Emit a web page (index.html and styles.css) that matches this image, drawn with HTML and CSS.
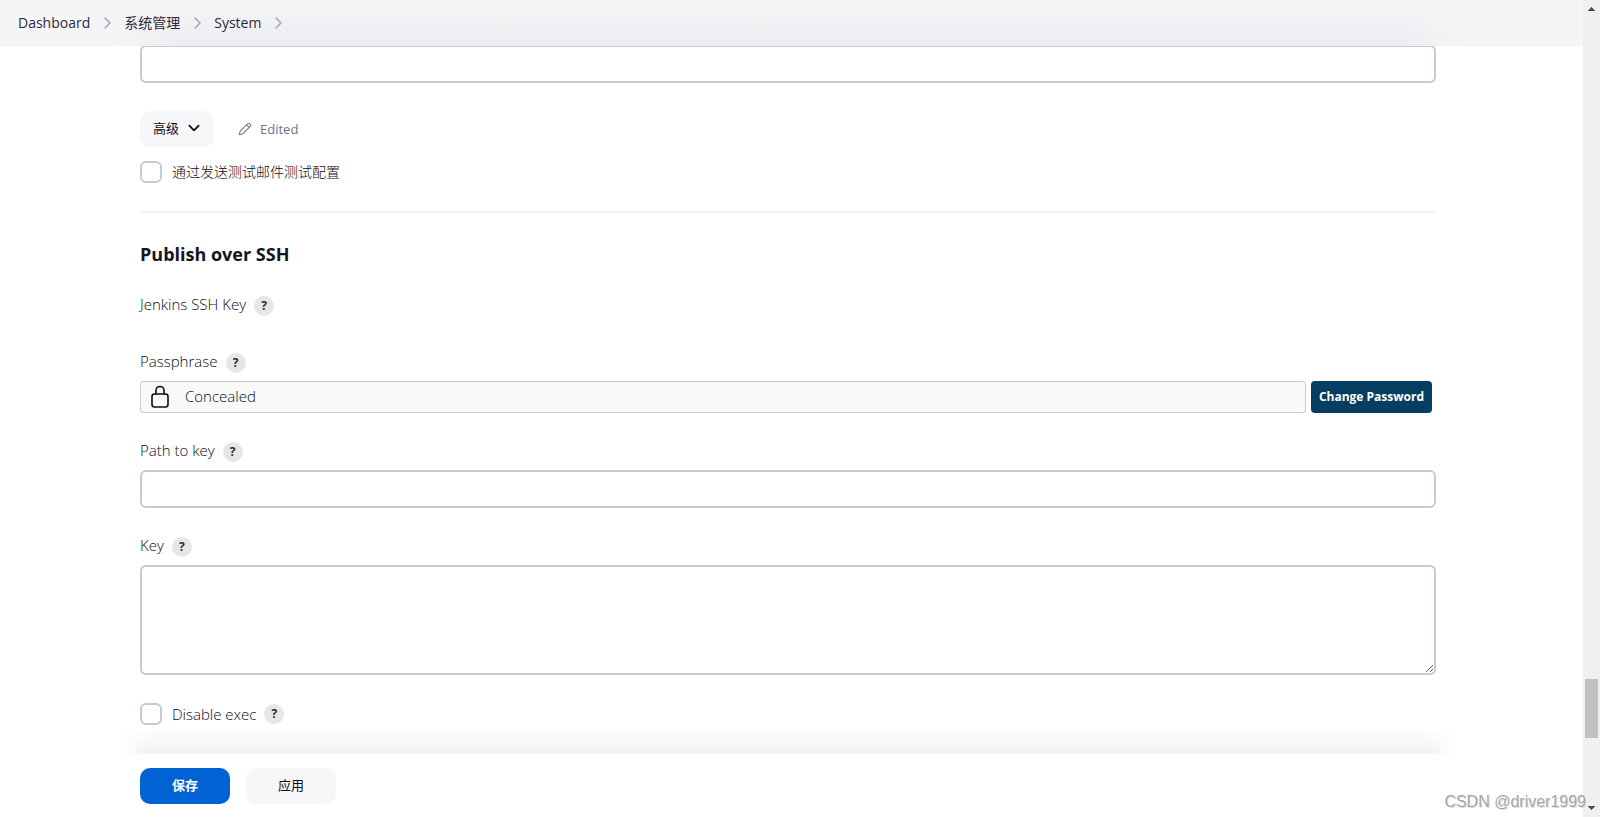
FILE: index.html
```html
<!DOCTYPE html>
<html lang="zh-CN">
<head>
  <meta charset="UTF-8">
  <title>System [Jenkins]</title>
  <link rel="stylesheet" href="styles.css">
</head>
<body>
  <div class="page">
    <nav class="breadcrumbs">
      <a href="#">Dashboard</a>
      <svg class="chevron" viewBox="0 0 12 12"><path d="M4 1l5 5-5 5"/></svg>
      <a href="#">系统管理</a>
      <svg class="chevron" viewBox="0 0 12 12"><path d="M4 1l5 5-5 5"/></svg>
      <a href="#">System</a>
      <svg class="chevron" viewBox="0 0 12 12"><path d="M4 1l5 5-5 5"/></svg>
    </nav>

    <form class="config" id="config">
      <input class="text-input" type="text" aria-label="用户默认邮件后缀">

      <div class="advanced">
        <button class="btn btn-advanced" type="button">高级
          <svg viewBox="0 0 12 12"><path d="M2 4l4 4 4-4"/></svg>
        </button>
        <span class="edited">
          <svg viewBox="0 0 16 16"><path d="M1.500 14.500l1-4L11 2a1.700 1.700 0 0 1 2.400 0l.6.6a1.700 1.700 0 0 1 0 2.400L5.500 13.500z M9.800 3.200l3 3"/></svg>
          Edited
        </span>
      </div>

      <div class="check-row">
        <input type="checkbox" id="testMail">
        <label for="testMail">通过发送测试邮件测试配置</label>
      </div>

      <section class="section">
        <h2>Publish over SSH</h2>

        <div class="item item-empty">
          <div class="item-label"><span>Jenkins SSH Key</span><button class="help" type="button">?</button></div>
        </div>

        <div class="item">
          <div class="item-label"><span>Passphrase</span><button class="help" type="button">?</button></div>
          <div class="secret">
            <div class="secret-value">
              <svg viewBox="0 0 20 24"><rect x="2" y="9" width="16" height="13" rx="2.500"/><path d="M6 9V5.500a4 4 0 0 1 8 0V9"/></svg>
              <span>Concealed</span>
            </div>
            <button class="btn-secret" type="button">Change Password</button>
          </div>
        </div>

        <div class="item">
          <div class="item-label"><label for="keyPath">Path to key</label><button class="help" type="button">?</button></div>
          <input class="text-input" id="keyPath" type="text">
        </div>

        <div class="item item-last">
          <div class="item-label"><label for="key">Key</label><button class="help" type="button">?</button></div>
          <textarea class="text-input" id="key"></textarea>
        </div>

        <div class="check-row check-row-latin">
          <input type="checkbox" id="disableExec">
          <label for="disableExec">Disable exec</label>
          <button class="help" type="button">?</button>
        </div>
      </section>
    </form>

    <footer class="bottom-bar">
      <button class="btn btn-primary" type="submit" form="config">保存</button>
      <button class="btn btn-apply" type="button">应用</button>
    </footer>
  </div>

  <div class="scrollbar" aria-hidden="true">
    <svg viewBox="0 0 17 17"><path d="M8 7h1v1h1v1h1v1h1v1H5v-1h1V9h1V8h1z"/></svg>
    <div class="scroll-before"></div>
    <div class="scroll-thumb"></div>
    <div class="scroll-after"></div>
    <svg viewBox="0 0 17 17"><path d="M5 6h7v1h-1v1h-1v1H9v1H8V9H7V8H6V7H5z"/></svg>
  </div>
  <div class="watermark">CSDN @driver1999</div>
</body>
</html>
```
FILE: styles.css
```css
* { box-sizing:border-box; }
body { margin:0; height:100vh; display:grid; grid-template-columns:minmax(0, 1fr) 17px; overflow:hidden; background:#fff; color:#0c0c14; font:300 14px/20px "Open Sans", "Noto Sans CJK SC", sans-serif; }
button, input, textarea { font:inherit; color:inherit; }
button { border:none; cursor:pointer; }
svg { display:block; flex:none; fill:none; stroke:currentColor; stroke-linecap:round; stroke-linejoin:round; }

.page { display:flex; flex-direction:column; height:100vh; min-width:0; }

.breadcrumbs { position:relative; z-index:1; flex:none; display:flex; align-items:center; gap:11px; height:46px; padding:0 18px; background:#f5f5f8; color:#2b2b36; font-weight:400; }
.breadcrumbs::before { content:""; position:absolute; z-index:-1; left:115px; right:115px; top:0; bottom:0; background:linear-gradient(transparent, rgba(20, 20, 50, .03)); mask-image:linear-gradient(90deg, transparent, #000 60px, #000 calc(100% - 60px), transparent); }
.breadcrumbs a { color:inherit; text-decoration:none; }
.chevron { width:12px; height:12px; color:#a5a5b5; stroke-width:1.5; }

.config { flex:1; min-height:0; overflow:hidden; margin-top:-1px; padding:0 147px 0 140px; }
.text-input { display:block; width:100%; height:38px; padding:6px 10px; border:2px solid #c3ccd1; border-radius:6px; background:#fff; outline:none; }
textarea.text-input { height:110px; resize:vertical; }

.btn { height:36px; padding:0 13px 2px; border-radius:10px; background:#f7f7fa; font-size:13px; font-weight:400; }
.advanced { display:flex; align-items:center; gap:24px; margin:28px 0 14px; }
.btn-advanced { display:flex; align-items:center; gap:8px; }
.btn-advanced svg { width:14px; height:14px; stroke-width:1.5; }
.edited { display:flex; align-items:center; gap:8px; color:#73738c; font-size:13px; font-weight:400; }
.edited svg { width:14px; height:14px; stroke-width:1.2; }

.check-row { display:flex; align-items:center; gap:8px; }
.check-row-latin { font-size:15px; }
.check-row input { appearance:none; width:22px; height:22px; margin:0 2px 0 0; border:2px solid #c3ccd1; border-radius:6px; background:#fff; }

.section { margin-top:28px; border-top:2px solid #f3f3f8; padding-top:29px; }
h2 { margin:0 0 30px; color:#14141f; font-size:18px; line-height:24px; font-weight:700; }
.item { margin-bottom:29px; }
.item-empty { margin-bottom:37px; }
.item-last { margin-bottom:28px; }
.item-label { display:flex; align-items:center; gap:8px; height:20px; margin-bottom:8px; font-size:15px; line-height:18px; }
.item-label > :first-child { padding-bottom:4px; }
.item-empty .item-label { margin-bottom:0; }
.help { width:20px; height:20px; padding:0; border-radius:50%; background:#e6e6e6; color:#2b2b36; font-size:12px; line-height:20px; font-weight:700; }

.secret { display:flex; gap:5px; padding-right:4px; }
.secret-value { flex:1; display:flex; align-items:center; gap:15px; height:32px; padding:0 9px; border:1px solid #c3ccd1; border-radius:3px; background:#f9f9f9; font-size:15px; }
.secret-value svg { width:20px; height:24px; stroke-width:1.6; }
.secret-value span { padding-bottom:2px; }
.btn-secret { padding:0 8px; border-radius:4px; background:#063e61; color:#fff; font-size:12px; font-weight:700; }

.bottom-bar { position:relative; flex:none; display:flex; gap:16px; padding:14px 140px 13px; background:#fff; }
.bottom-bar::before { content:""; position:absolute; left:120px; right:127px; bottom:100%; height:28px; background:linear-gradient(transparent, rgba(0, 0, 0, .055)); mask-image:linear-gradient(90deg, transparent, #000 30px, #000 calc(100% - 30px), transparent); pointer-events:none; }
.bottom-bar .btn { width:90px; }
.btn-primary.btn { background:#0062d3; color:#fff; font-weight:700; }

.scrollbar { display:flex; flex-direction:column; height:100vh; background:#f0f0f0; }
.scrollbar svg { width:17px; height:17px; fill:#505050; stroke:none; }
.scroll-before { flex:662; }
.scroll-thumb { flex:59; margin:0 2px; background:#c1c1c1; }
.scroll-after { flex:62; }

.watermark { position:absolute; right:14px; bottom:5px; color:#a6a6a6; font:16px/20px "Liberation Sans", sans-serif; text-shadow:-1px -1px 0 #fff, 1px 1px 0 #ddd; }
```
